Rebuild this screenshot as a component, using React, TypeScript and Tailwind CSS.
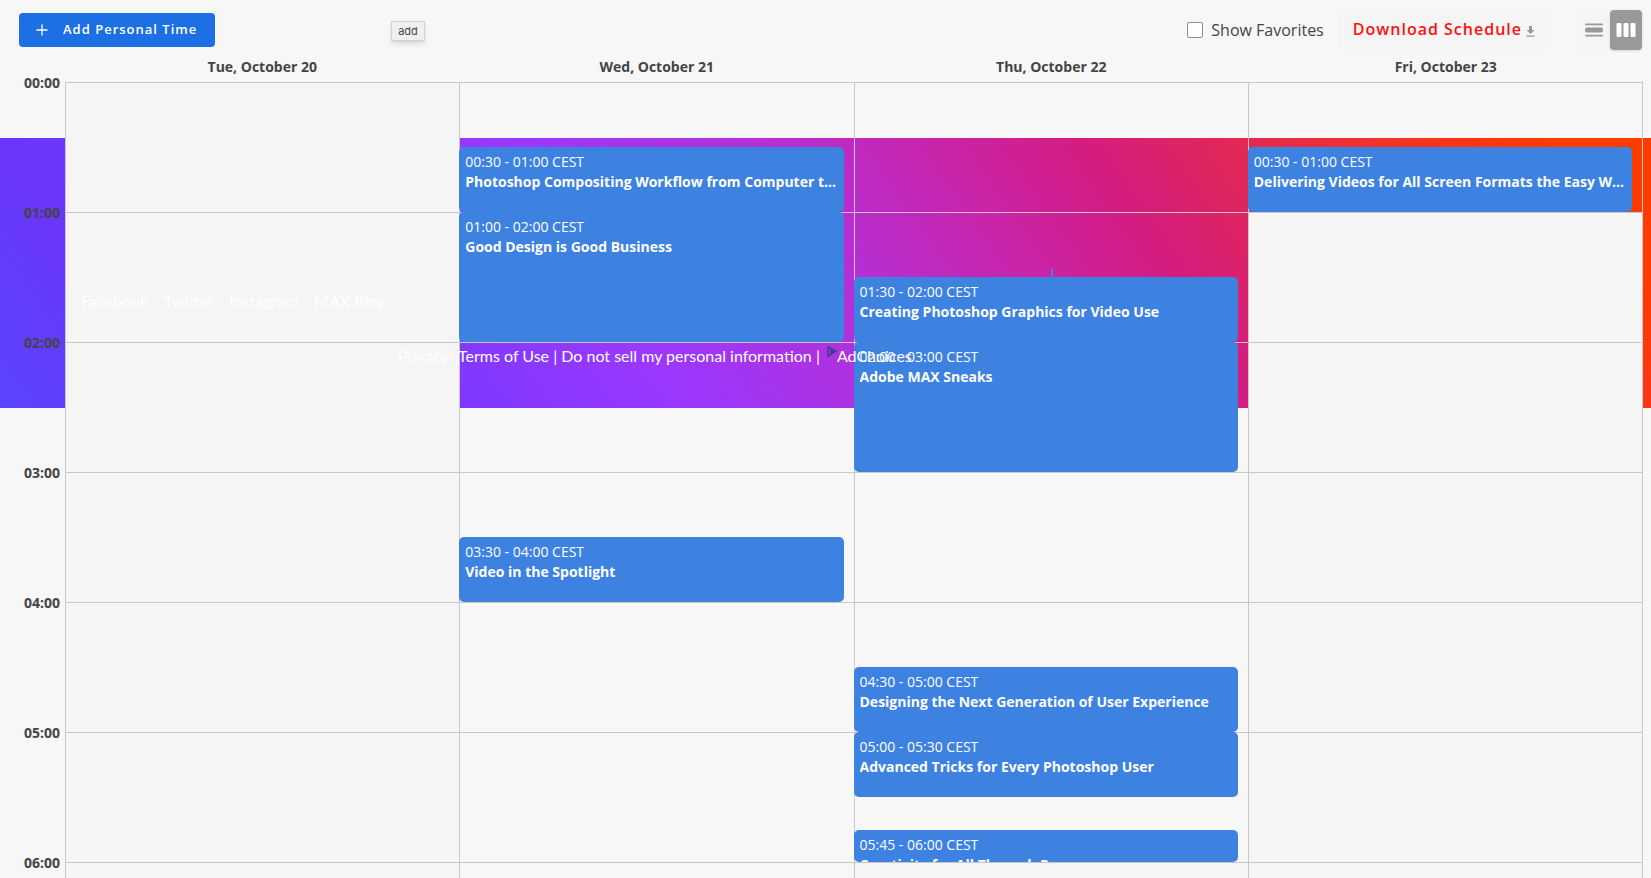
import React, { useState } from 'react'

interface Session {
  start: number;
  end: number;
  time: string;
  title: string;
}

interface Day {
  label: string;
  opaque: boolean[];
  sessions: Session[];
}

const HOUR = 130;
const hours = ['00:00', '01:00', '02:00', '03:00', '04:00', '05:00', '06:00'];

const days: Day[] = [
  {
    label: 'Tue, October 20',
    opaque: [true, true, true, true, true, true, true],
    sessions: [],
  },
  {
    label: 'Wed, October 21',
    opaque: [false, false, false, false, false, false, false],
    sessions: [
      { start: 0.5, end: 1, time: '00:30 - 01:00 CEST', title: 'Photoshop Compositing Workflow from Computer to Mobile' },
      { start: 1, end: 2, time: '01:00 - 02:00 CEST', title: 'Good Design is Good Business' },
      { start: 3.5, end: 4, time: '03:30 - 04:00 CEST', title: 'Video in the Spotlight' },
    ],
  },
  {
    label: 'Thu, October 22',
    opaque: [false, false, false, false, false, false, true],
    sessions: [
      { start: 1.5, end: 2, time: '01:30 - 02:00 CEST', title: 'Creating Photoshop Graphics for Video Use' },
      { start: 2, end: 3, time: '02:00 - 03:00 CEST', title: 'Adobe MAX Sneaks' },
      { start: 4.5, end: 5, time: '04:30 - 05:00 CEST', title: 'Designing the Next Generation of User Experience' },
      { start: 5, end: 5.5, time: '05:00 - 05:30 CEST', title: 'Advanced Tricks for Every Photoshop User' },
      { start: 5.75, end: 6, time: '05:45 - 06:00 CEST', title: 'Creativity for All Through Process' },
    ],
  },
  {
    label: 'Fri, October 23',
    opaque: [false, true, true, true, true, true, true],
    sessions: [
      { start: 0.5, end: 1, time: '00:30 - 01:00 CEST', title: 'Delivering Videos for All Screen Formats the Easy Way' },
    ],
  },
];

const Toolbar = () => {
  const [favorites, setFavorites] = useState<boolean>(false);

  return (
    <div className="flex items-start justify-between h-[58px] pl-[19px] pr-[9px] pt-[10px]">
      <div className="flex items-start">
        <button type="button" className="flex items-center mt-[3px] h-[34px] pl-[17px] pr-[18px] rounded bg-[#1c70e4] text-white text-[13px] font-semibold tracking-[1px]">
          <svg className="w-3 h-3 mr-[15px]" viewBox="0 0 12 12" fill="none" stroke="currentColor" strokeWidth="1.3">
            <path d="M6 .5v11M.5 6h11" />
          </svg>
          Add Personal Time
        </button>
        <div role="tooltip" className="ml-[176px] mt-[11px] h-5 px-[6px] border border-[#d0d0d0] bg-[#f0f0f0] text-[11px] leading-[18px] text-[#444] shadow-md font-['Inter',sans-serif]">add</div>
      </div>
      <div className="flex items-start">
        <label className="flex items-center gap-2 h-10 text-base text-[#444]">
          <input type="checkbox" className="appearance-none w-4 h-4 rounded-xs border border-[#8e8e8e] bg-white checked:bg-[#1c70e4]" checked={favorites} onChange={(e) => setFavorites(e.target.checked)} />
          Show Favorites
        </label>
        <button type="button" className="flex items-center ml-[15px] h-10 pl-[14px] pr-3 pb-[2px] rounded bg-[#f5f5f5] text-base font-semibold tracking-[1px] text-[#ff0f0f]">
          Download Schedule
          <svg className="ml-1 mt-1 w-[9px] h-[11px]" viewBox="0 0 9 11" fill="#999">
            <path d="M3 0h3v4h2.500L4.500 8 .5 4H3zM.5 9.500h8v1.300h-8z" />
          </svg>
        </button>
        <div className="flex ml-[29px] rounded bg-[#f5f5f5]">
          <button type="button" aria-label="List view" className="flex items-center justify-center w-[34px] h-10 pl-[2px]">
            <svg className="w-[18px] h-[14px]" viewBox="0 0 18 14" fill="#999">
              <rect y=".5" width="18" height="1.800" rx=".9" />
              <rect y="4.500" width="18" height="5" rx="2" />
              <rect y="11.700" width="18" height="1.800" rx=".9" />
            </svg>
          </button>
          <button type="button" aria-label="Calendar view" className="flex items-center justify-center w-8 h-10 rounded bg-[#999] shadow">
            <svg className="w-5 h-[14px]" viewBox="0 0 20 14" fill="#fff">
              <rect x=".5" width="5" height="14" rx="1" />
              <rect x="7.500" width="5" height="14" rx="1" />
              <rect x="14.500" width="5" height="14" rx="1" />
            </svg>
          </button>
        </div>
      </div>
    </div>
  );
}

const SessionCard = ({ session }: { session: Session }) => (
  <a
    href="#"
    className="absolute -left-px right-[10px] block overflow-hidden rounded-[5px] bg-[#3d82e1] px-[6px] pt-[5px] text-sm leading-5 text-white"
    style={{ top: session.start * HOUR, height: (session.end - session.start) * HOUR }}
  >
    <div className="truncate">{session.time}</div>
    <div className="truncate font-bold">{session.title}</div>
  </a>
);

// Gradient band of the site footer, it lies behind the calendar
const FooterBand = () => (
  <div className="absolute inset-x-0 top-[138px] h-[270px] bg-[linear-gradient(55deg,#5a44ff_0%,#6a36fa_10%,#8038ff_26%,#9a38ff_37%,#b62fd3_52%,#cb23a4_62%,#d41c7f_69%,#e62b4b_79%,#f7341a_88%,#ff3c00_95%)]">
    <svg className="absolute left-[1043px] top-[130px] w-[18px] h-[18px]" viewBox="0 0 18 18" fill="none" stroke="#3d82e1" strokeWidth="2">
      <path d="M9 1v16M1 10h16" />
    </svg>
  </div>
);

// The footer links float above the calendar
const FooterLinks = () => (
  <div className="absolute inset-x-0 top-[138px] h-[270px] pointer-events-none text-base leading-5 text-white font-['Lato',sans-serif]">
    <div className="absolute left-[81px] top-[153px] flex">
      <a href="#">Facebook</a>
      <span className="mx-[6px]">.</span>
      <a href="#">Twitter</a>
      <span className="mx-[6px]">.</span>
      <a href="#">Instagram</a>
      <span className="mx-[6px]">.</span>
      <a href="#">MAX Blog</a>
    </div>
    <div className="absolute left-[398px] top-[208px] flex whitespace-pre">
      <a href="#" className="mr-[9px]">Privacy</a>
      <a href="#">Terms of Use</a> | <a href="#">Do not sell my personal information</a> |
      <svg className="ml-[7px] w-[10px] h-[11px]" viewBox="0 0 10 11" fill="none" stroke="#3c3c96" strokeWidth="1.500">
        <path d="M1 1v9l8-5z" />
        <path d="M4 4v3l2-1.500z" />
      </svg>
      <a href="#">AdChoices</a>
    </div>
  </div>
);

export default function App() {
  return (
    <div className="relative h-screen overflow-hidden bg-[#f7f7f7] text-[#444] font-['Open_Sans',sans-serif]">
      <FooterBand />
      <div className="relative">
        <Toolbar />
        <div className="flex pr-2">
          <div className="w-[65px] shrink-0 pt-[15px] pr-[5px] text-right text-sm font-bold">
            {hours.map((hour) => <div key={hour} className="h-[130px] leading-5">{hour}</div>)}
          </div>
          <div className="grow">
            <div className="grid grid-cols-4 h-6 text-center text-sm leading-[18px] font-bold">
              {days.map((day) => <div key={day.label}>{day.label}</div>)}
            </div>
            <div className="grid grid-cols-4 border-r border-[#c8c8c8]">
              {days.map((day) => (
                <div key={day.label} className="relative border-l border-[#c8c8c8]">
                  {day.opaque.map((opaque, index) => (
                    <div key={index} className={`h-[130px] border-t border-[#c8c8c8] ${opaque ? 'bg-[#f5f5f5]' : ''}`}></div>
                  ))}
                  {day.sessions.map((session) => <SessionCard key={session.time} session={session} />)}
                </div>
              ))}
            </div>
          </div>
        </div>
      </div>
      <FooterLinks />
    </div>
  );
}
